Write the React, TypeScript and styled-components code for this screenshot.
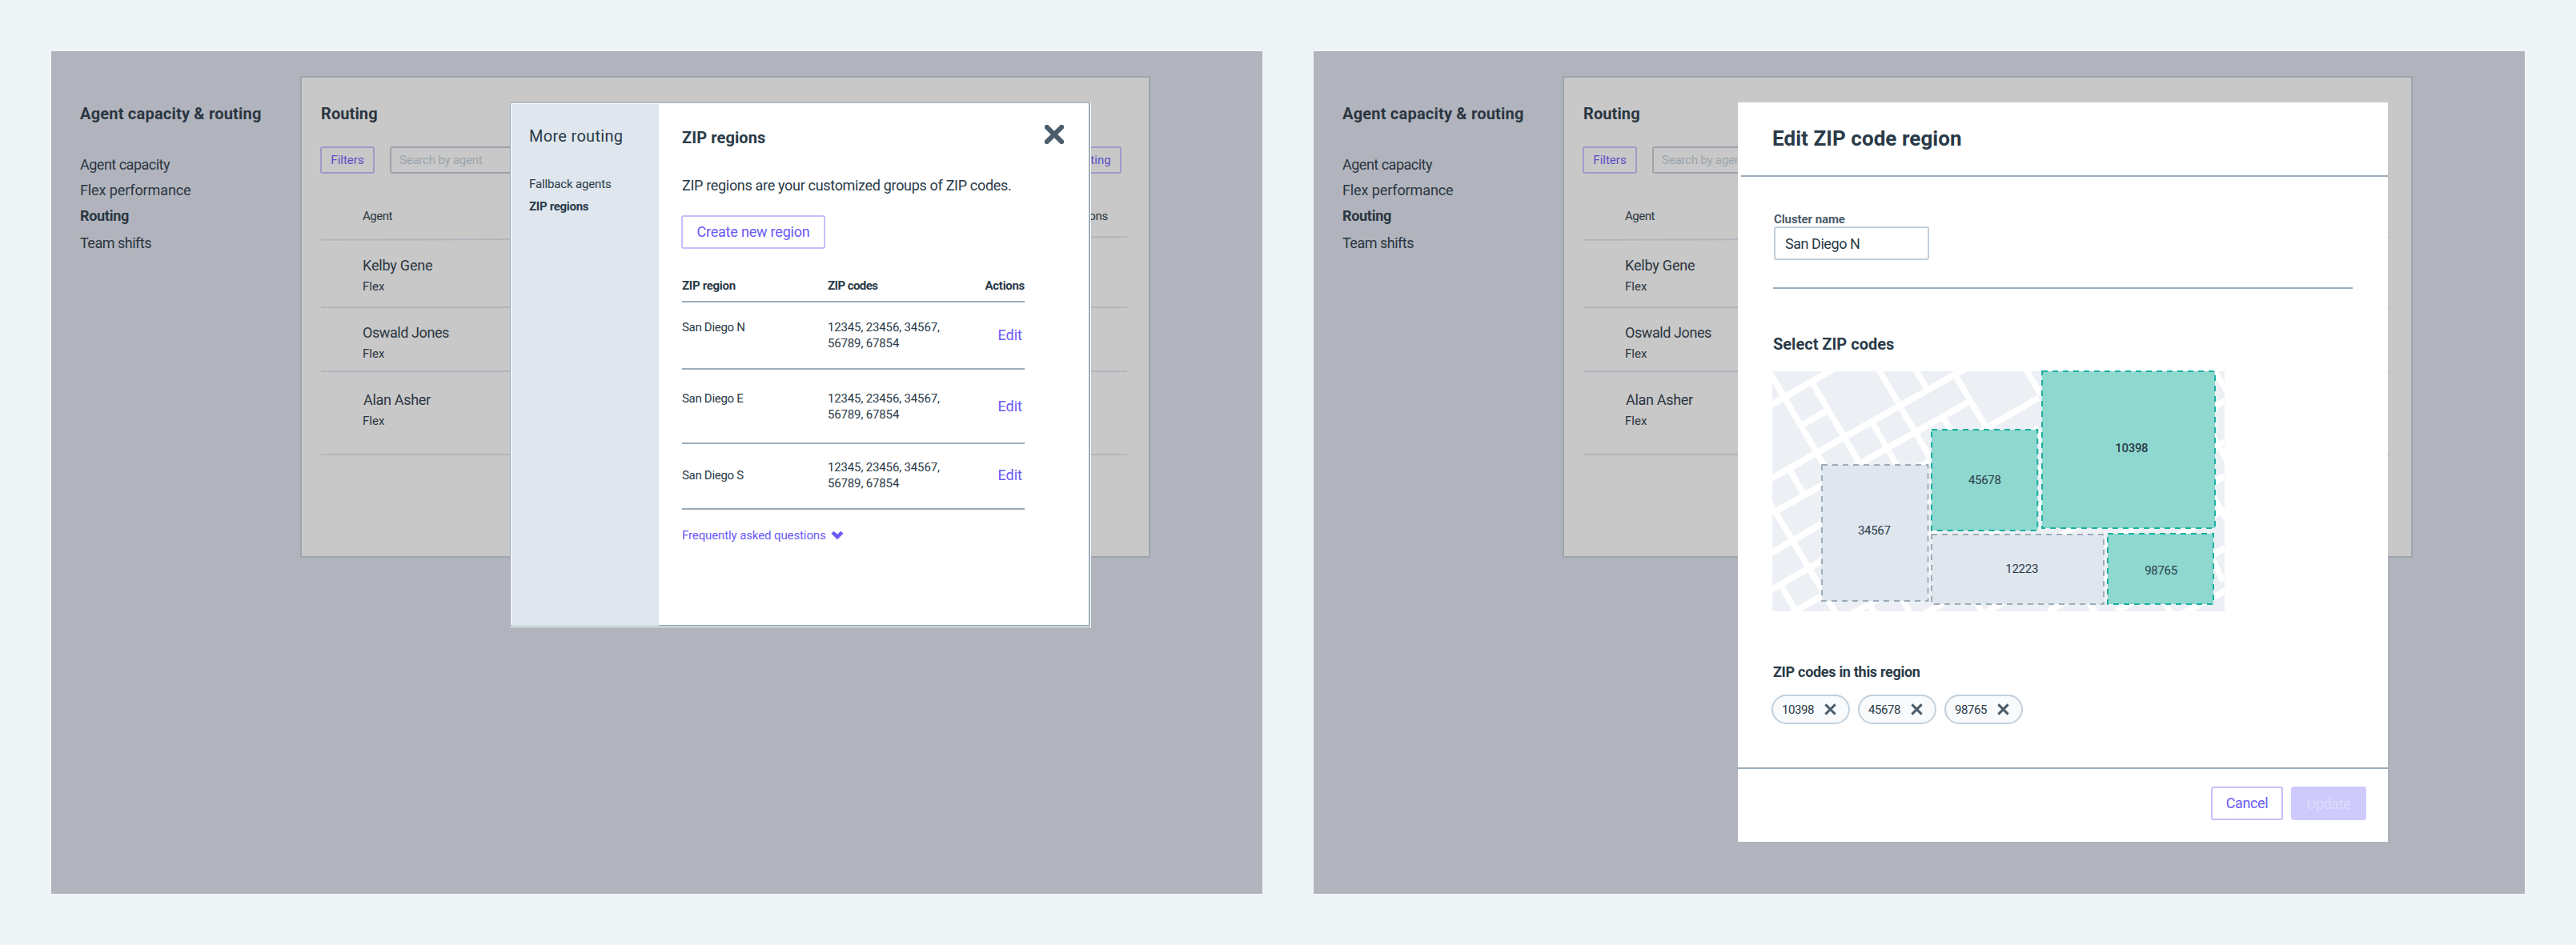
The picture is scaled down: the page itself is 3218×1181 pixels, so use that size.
import React from "react";
import styled, { createGlobalStyle } from "styled-components";

const ink = "#2a3a48";
const dimInk = "#2b3641";
const purple = "#6a5af5";
const rule = "#9cacb9";

const GlobalStyle = createGlobalStyle`
  *, *::before, *::after { box-sizing: border-box; }
  html, body { margin: 0; padding: 0; background: #eff4f7; }
  body { font-family: Roboto, "Liberation Sans", sans-serif; color: ${ink}; }
  button, input { font: inherit; color: inherit; margin: 0; background: none; }
`;

/* ---------- text ---------- */

const Heading = styled.h2<{ $weight?: number; $spacing?: number }>`
  margin: 0;
  font-size: 20px;
  line-height: 24px;
  font-weight: ${(p) => p.$weight ?? 700};
  letter-spacing: ${(p) => p.$spacing ?? 0.1}px;
  white-space: nowrap;
`;

const Body = styled.div<{ $bold?: boolean; $spacing?: number }>`
  font-size: 18px;
  line-height: 22px;
  font-weight: ${(p) => (p.$bold ? 700 : 400)};
  letter-spacing: ${(p) => p.$spacing ?? -0.3}px;
  white-space: nowrap;
`;

const Small = styled.div<{ $bold?: boolean; $spacing?: number }>`
  font-size: 15px;
  line-height: 18px;
  font-weight: ${(p) => (p.$bold ? 700 : 400)};
  letter-spacing: ${(p) => p.$spacing ?? -0.3}px;
  white-space: nowrap;
`;

/* ---------- dimmed routing page ---------- */

const Canvas = styled.main`
  display: flex;
  gap: 64px;
  width: 3218px;
  height: 1181px;
  padding: 64px;
  overflow: hidden;
`;

const Frame = styled.section`
  position: relative;
  display: flex;
  flex: none;
  width: 1513px;
  height: 1053px;
  background: #b1b4bd;
`;

const SideNav = styled.nav`
  width: 311px;
  padding: 66px 0 0 36px;
  color: ${dimInk};
`;

const NavList = styled.div`
  display: flex;
  flex-direction: column;
  gap: 10px;
  margin-top: 41px;

  & > :last-child {
    margin-top: 2px;
  }
`;

const Panel = styled.div`
  width: 1062px;
  height: 602px;
  margin-top: 31px;
  padding: 33px 27px 0 23px;
  border: 2px solid #9da5ac;
  background: #c8c8c8;
  color: ${dimInk};
`;

const PanelTitle = styled(Heading)`
  margin-left: 1px;
`;

const Toolbar = styled.div`
  display: flex;
  align-items: stretch;
  height: 34px;
  margin: 29px 7px 0 0;
`;

const ToolButton = styled.button<{ $width: number }>`
  width: ${(p) => p.$width}px;
  padding: 0;
  border: 2px solid #a29ac9;
  border-radius: 3px;
  color: #5c4dc6;
  font-size: 15px;
  line-height: 18px;
  font-weight: 400;
  white-space: nowrap;

  &:last-child {
    margin-left: auto;
  }
`;

const Search = styled.div`
  width: 270px;
  margin-left: 19px;
  padding: 6px 10px;
  border: 2px solid #9da3aa;
  border-radius: 3px;
  color: #9ba5ad;
  font-size: 15px;
  line-height: 18px;
  letter-spacing: -0.22px;
`;

const AgentHeader = styled.div`
  display: flex;
  justify-content: space-between;
  height: 80px;
  padding: 44px 24px 0 53px;
`;

const HeaderRule = styled.div`
  height: 2px;
  margin-left: 1px;
  background: #b0b6bc;
  transform: skewY(-0.21deg);
`;

const AgentRow = styled.div<{ $height: number; $pad: number; $indent?: number }>`
  height: ${(p) => p.$height}px;
  margin-left: 1px;
  padding: ${(p) => p.$pad}px 0 0 52px;
  border-bottom: 2px solid #b0b6bc;

  & > :first-child {
    margin: 0 0 6px ${(p) => p.$indent ?? 0}px;
  }
`;

/* ---------- ZIP regions dialog ---------- */

const RegionsDialog = styled.div`
  position: absolute;
  left: 573px;
  top: 64px;
  width: 726px;
  height: 656px;
  padding: 0 1px 1px 0;
  background: #fff;
`;

const RegionsFrame = styled.div`
  display: flex;
  height: 100%;
  border: solid ${rule};
  border-width: 1px 2px 2px 1px;
`;

const DialogNav = styled.nav`
  flex: none;
  width: 184px;
  margin: 1px 0 -1px 1px;
  padding: 28px 0 0 22px;
  background: #dfe6ee;
`;

const DialogLinks = styled.div`
  display: grid;
  gap: 10px;
  margin-top: 39px;
`;

const DialogMain = styled.div`
  flex: 1;
  padding: 31px 31px 0 29px;
`;

const TitleRow = styled.div`
  display: flex;
  justify-content: space-between;
  height: 24px;
`;

const IconButton = styled.button`
  display: block;
  padding: 0;
  border: 0;
  line-height: 0;
`;

const CloseButton = styled(IconButton)`
  height: 24px;
  margin-top: -4px;
`;

const Intro = styled(Body)`
  margin-top: 37px;
`;

const OutlineButton = styled.button<{ $width: number; $spacing?: number }>`
  width: ${(p) => p.$width}px;
  height: 42px;
  padding: 0;
  border: 2px solid #c5bffb;
  border-radius: 3px;
  color: ${purple};
  font-size: 18px;
  line-height: 22px;
  font-weight: 400;
  letter-spacing: ${(p) => p.$spacing ?? -0.2}px;
  white-space: nowrap;
`;

const CreateButton = styled(OutlineButton)`
  margin: 26px 0 0 -1px;
`;

const RegionTable = styled.div`
  width: 428px;
  margin-top: 37px;
`;

const RegionColumns = styled.div`
  display: grid;
  grid-template-columns: 182px 1fr auto;
  align-items: start;
  border-bottom: 2px solid ${rule};
`;

const RegionHead = styled(RegionColumns)`
  height: 30px;
`;

const RegionRow = styled(RegionColumns)<{ $height: number; $pad: number }>`
  height: ${(p) => p.$height}px;
  padding-top: ${(p) => p.$pad}px;
`;

const RegionName = styled(Small)<{ $drop: number }>`
  margin-top: ${(p) => p.$drop}px;
`;

const Codes = styled(Small)`
  width: 150px;
  line-height: 20px;
  white-space: normal;
`;

const EditLink = styled.a`
  margin: 9px 3px 0 0;
  color: ${purple};
  font-size: 18px;
  line-height: 22px;
`;

const Faq = styled.a`
  display: flex;
  align-items: center;
  gap: 6px;
  margin-top: 23px;
  color: ${purple};
  font-size: 15px;
  line-height: 18px;
  letter-spacing: -0.11px;
  white-space: nowrap;
`;

/* ---------- edit region dialog ---------- */

const EditDialog = styled.div`
  position: absolute;
  left: 530px;
  top: 64px;
  width: 812px;
  height: 924px;
  background: #fff;
`;

const EditHeader = styled.header`
  height: 93px;
  margin-left: 4px;
  padding: 30px 0 0 39px;
  border-bottom: 2px solid ${rule};
`;

const EditTitle = styled.h1`
  margin: 0;
  font-size: 26px;
  line-height: 30px;
  font-weight: 700;
  letter-spacing: 0.06px;
`;

const EditBody = styled.div`
  height: 738px;
  padding: 44px 44px 0;
`;

const Field = styled.label`
  display: block;
  margin-left: 1px;
  color: #4b5c6a;
`;

const FieldInput = styled.input`
  display: block;
  width: 194px;
  height: 42px;
  padding: 0 12px;
  border: 2px solid #c2ceda;
  border-radius: 3px;
  outline: 0;
  color: ${ink};
  font-size: 18px;
  letter-spacing: -0.45px;
`;

const Divider = styled.hr`
  height: 2px;
  margin: 34px 0 57px;
  border: 0;
  background: ${rule};
`;

const MapBox = styled.div`
  margin: 22px 0 65px -1px;
  height: 300px;

  svg {
    display: block;
    overflow: visible;
  }
`;

const MapLabel = styled.text<{ $strong?: boolean }>`
  font-size: 15px;
  font-weight: ${(p) => (p.$strong ? 500 : 400)};
  text-anchor: middle;
  letter-spacing: -0.3px;
  fill: ${ink};
`;

const Chips = styled.div`
  display: flex;
  gap: 10px;
  margin: 17px 0 0 -2px;
`;

const Chip = styled.div`
  display: flex;
  align-items: center;
  justify-content: space-between;
  width: 98px;
  height: 37px;
  padding: 0 15px 0 11px;
  border: 2px solid #c2d0dc;
  border-radius: 19px;
  background: #f8fafc;
`;

const EditFooter = styled.footer`
  display: flex;
  justify-content: flex-end;
  gap: 10px;
  height: 93px;
  padding: 22px 27px 0 0;
  border-top: 2px solid ${rule};
`;

const UpdateButton = styled.button`
  width: 94px;
  height: 42px;
  padding: 0;
  border: 0;
  border-radius: 4px;
  background: #cfcafc;
  color: #dfdbfd;
  font-size: 18px;
  letter-spacing: -0.4px;
`;

/* ---------- icons ---------- */

const Cross = ({ size, thickness }: { size: number; thickness: number }) => {
  const a = thickness * 0.46;
  const b = size - a;
  return (
    <svg width={size} height={size} viewBox={`0 0 ${size} ${size}`} fill="none">
      <path
        d={`M${a} ${a}L${b} ${b}M${b} ${a}L${a} ${b}`}
        stroke="#4b5d6b"
        strokeWidth={thickness}
        strokeLinecap={thickness > 4 ? "round" : "butt"}
      />
    </svg>
  );
};

const Chevron = () => (
  <svg width="16" height="12" viewBox="0 0 17 12">
    <path d="M0.5 3.6L3.8 0.4L8.5 4.6L13.2 0.4L16.5 3.6L8.5 11.6Z" fill={purple} />
  </svg>
);

/* ---------- ZIP map ---------- */

type Zone = {
  code: string;
  x: number;
  y: number;
  w: number;
  h: number;
  cx: number;
  base: number;
  selected?: boolean;
  strong?: boolean;
};

const zones: Zone[] = [
  { code: "34567", x: 62, y: 117, w: 132.5, h: 170, cx: 127.3, base: 204.3 },
  { code: "12223", x: 199, y: 204, w: 215, h: 87, cx: 311.7, base: 252.3 },
  { code: "45678", x: 199, y: 73, w: 132.3, h: 126, cx: 265.3, base: 141, selected: true },
  { code: "10398", x: 337, y: 0, w: 216, h: 196, cx: 448.8, base: 101.3, selected: true, strong: true },
  { code: "98765", x: 419, y: 203, w: 132, h: 88, cx: 485.5, base: 254.3, selected: true },
];

const streets =
  "M-10 47L82 -6M-10 139L246 -6M6 174L246 38M-10 232L333 33M-10 278L337 79M18 306L337 122" +
  "M100 303L565 37M185 306L565 88M255 308L565 131M345 300L565 172M430 300L565 221M500 310L570 272M39 66L67 50";

const avenues =
  "M-8 -7L72 130M51 16L112 120M130 -7L203 118M176 -7L192 20M228 4L267 70M126 66L157 120M215 60L226 79" +
  "M314 -7L336 30M22 124L40 155M-6 159L82 307M12 270L34 307M118 286L128 303M162 284L175 307M252 284L266 308" +
  "M393 284L407 308M487 284L501 308M549 -7L570 29M549 78L570 115M549 153L570 190M549 233L563 262M328 70L338 88";

const ZipMap = () => (
  <MapBox>
    <svg width="565" height="300" viewBox="0 0 565 300">
      <defs>
        <clipPath id="map-area">
          <rect width="565" height="300" />
        </clipPath>
      </defs>
      <g clipPath="url(#map-area)">
        <rect width="565" height="300" fill="#ecf0f5" />
        <path d={streets} stroke="#fff" strokeWidth="8" fill="none" />
        <path d={avenues} stroke="#fff" strokeWidth="7.5" fill="none" />
      </g>
      {zones.map((z) => (
        <g key={z.code}>
          <rect
            x={z.x}
            y={z.y}
            width={z.w}
            height={z.h}
            fill={z.selected ? "#8ed8cf" : "#dfe6ee"}
            stroke={z.selected ? "#1bb0a0" : rule}
            strokeWidth="2"
            strokeDasharray="7 6"
          />
          <MapLabel x={z.cx} y={z.base} $strong={z.strong}>
            {z.code}
          </MapLabel>
        </g>
      ))}
    </svg>
  </MapBox>
);

/* ---------- page ---------- */

const agents = [
  { name: "Kelby Gene", height: 86, pad: 22, spacing: -0.19 },
  { name: "Oswald Jones", height: 80, pad: 20, spacing: -0.42 },
  { name: "Alan Asher", height: 104, pad: 24, spacing: -0.3, indent: 1 },
];

const RoutingPage = () => (
  <>
    <SideNav>
      <Heading $spacing={0.21}>Agent capacity &amp; routing</Heading>
      <NavList>
        <Body $spacing={-0.5}>Agent capacity</Body>
        <Body $spacing={-0.11}>Flex performance</Body>
        <Body $bold>Routing</Body>
        <Body $spacing={-0.5}>Team shifts</Body>
      </NavList>
    </SideNav>
    <Panel>
      <PanelTitle>Routing</PanelTitle>
      <Toolbar>
        <ToolButton $width={68}>Filters</ToolButton>
        <Search>Search by agent</Search>
        <ToolButton $width={112}>More routing</ToolButton>
      </Toolbar>
      <AgentHeader>
        <Small $spacing={-0.5}>Agent</Small>
        <Small>Actions</Small>
      </AgentHeader>
      <HeaderRule />
      {agents.map((a) => (
        <AgentRow key={a.name} $height={a.height} $pad={a.pad} $indent={a.indent}>
          <Body $spacing={a.spacing}>{a.name}</Body>
          <Small $spacing={0}>Flex</Small>
        </AgentRow>
      ))}
    </Panel>
  </>
);

const regions = [
  { name: "San Diego N", height: 84, pad: 21, drop: 1 },
  { name: "San Diego E", height: 93, pad: 26, drop: 1 },
  { name: "San Diego S", height: 82, pad: 19, drop: 11 },
];

const ZipRegions = () => (
  <RegionsDialog>
    <RegionsFrame>
      <DialogNav>
        <Heading $weight={400} $spacing={0.3}>
          More routing
        </Heading>
        <DialogLinks>
          <Small $spacing={-0.14}>Fallback agents</Small>
          <Small $bold>ZIP regions</Small>
        </DialogLinks>
      </DialogNav>
      <DialogMain>
        <TitleRow>
          <Heading>ZIP regions</Heading>
          <CloseButton aria-label="Close">
            <Cross size={24} thickness={6} />
          </CloseButton>
        </TitleRow>
        <Intro $spacing={-0.32}>ZIP regions are your customized groups of ZIP codes.</Intro>
        <CreateButton $width={180}>Create new region</CreateButton>
        <RegionTable>
          <RegionHead>
            <Small $bold>ZIP region</Small>
            <Small $bold $spacing={-0.55}>
              ZIP codes
            </Small>
            <Small $bold>Actions</Small>
          </RegionHead>
          {regions.map((r) => (
            <RegionRow key={r.name} $height={r.height} $pad={r.pad}>
              <RegionName $drop={r.drop}>{r.name}</RegionName>
              <Codes $spacing={-0.15}>12345, 23456, 34567, 56789, 67854</Codes>
              <EditLink>Edit</EditLink>
            </RegionRow>
          ))}
        </RegionTable>
        <Faq>
          Frequently asked questions
          <Chevron />
        </Faq>
      </DialogMain>
    </RegionsFrame>
  </RegionsDialog>
);

const EditRegion = () => (
  <EditDialog>
    <EditHeader>
      <EditTitle>Edit ZIP code region</EditTitle>
    </EditHeader>
    <EditBody>
      <Field>
        <Small $bold $spacing={-0.08}>
          Cluster name
        </Small>
        <FieldInput defaultValue="San Diego N" />
      </Field>
      <Divider />
      <Heading $spacing={0}>Select ZIP codes</Heading>
      <ZipMap />
      <Body $bold>ZIP codes in this region</Body>
      <Chips>
        {["10398", "45678", "98765"].map((code) => (
          <Chip key={code}>
            <Small $spacing={-0.4}>{code}</Small>
            <IconButton aria-label={`Remove ${code}`}>
              <Cross size={15} thickness={3} />
            </IconButton>
          </Chip>
        ))}
      </Chips>
    </EditBody>
    <EditFooter>
      <OutlineButton $width={90} $spacing={-0.35}>
        Cancel
      </OutlineButton>
      <UpdateButton disabled>Update</UpdateButton>
    </EditFooter>
  </EditDialog>
);

export default function App() {
  return (
    <>
      <GlobalStyle />
      <Canvas>
        <Frame>
          <RoutingPage />
          <ZipRegions />
        </Frame>
        <Frame>
          <RoutingPage />
          <EditRegion />
        </Frame>
      </Canvas>
    </>
  );
}
